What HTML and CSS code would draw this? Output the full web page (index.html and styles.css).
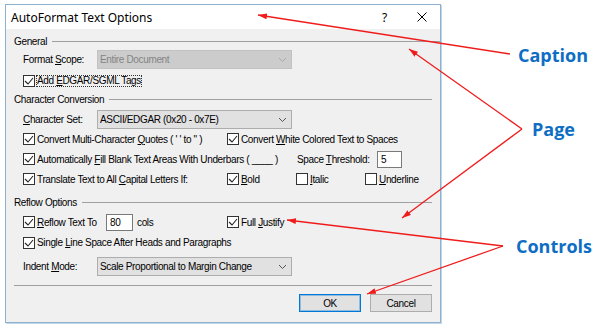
FILE: index.html
```html
<!DOCTYPE html>
<html lang="en">
<head>
  <meta charset="UTF-8">
  <title>AutoFormat Text Options</title>
  <link rel="stylesheet" href="styles.css">
</head>
<body>
  <div class="stage">
    <div class="dialog">
      <div class="titlebar">
        <span class="title">AutoFormat Text Options</span>
        <span class="help">?</span>
        <span class="close">
          <svg width="10" height="10" viewBox="0 0 10 10"><path d="M0.5 0.5 L9.5 9.5 M9.5 0.5 L0.5 9.5" stroke="#000" stroke-width="1" fill="none"/></svg>
        </span>
      </div>

      <div class="page">
        <div class="group-head general"><span>General</span><i class="rule wide"></i></div>
        <div class="row combo-row scope">
          <span class="lbl">Format <u>S</u>cope:</span>
          <div class="combo off"><span>Entire Document</span><svg class="chev" width="7" height="4" viewBox="0 0 7 4"><path d="M0 0 L3.5 3.5 L7 0" stroke="#a9a9a9" fill="none"/></svg></div>
        </div>
        <div class="row edgar">
          <span class="check on"><svg width="10" height="10" viewBox="0 0 10 10"><path d="M1 5 L4 8 L9 2" stroke="#222" stroke-width="1.1" fill="none"/></svg></span>
          <span class="focus">Add <u>E</u>DGAR/SGML Tags</span>
        </div>

        <div class="group-head conversion"><span>Character Conversion</span><i class="rule"></i></div>
        <div class="row combo-row charset">
          <span class="lbl"><u>C</u>haracter Set:</span>
          <div class="combo"><span>ASCII/EDGAR (0x20 - 0x7E)</span><svg class="chev" width="7" height="4" viewBox="0 0 7 4"><path d="M0 0 L3.5 3.5 L7 0" stroke="#555" fill="none"/></svg></div>
        </div>
        <div class="row">
          <span class="cell col-a"><span class="check on"><svg width="10" height="10" viewBox="0 0 10 10"><path d="M1 5 L4 8 L9 2" stroke="#222" stroke-width="1.1" fill="none"/></svg></span><span>Convert Multi-Character <u>Q</u>uotes ( ' ' to " )</span></span>
          <span class="cell"><span class="check on"><svg width="10" height="10" viewBox="0 0 10 10"><path d="M1 5 L4 8 L9 2" stroke="#222" stroke-width="1.1" fill="none"/></svg></span><span>Convert <u>W</u>hite Colored Text to Spaces</span></span>
        </div>
        <div class="row">
          <span class="cell col-fill"><span class="check on"><svg width="10" height="10" viewBox="0 0 10 10"><path d="M1 5 L4 8 L9 2" stroke="#222" stroke-width="1.1" fill="none"/></svg></span><span>Automatically <u>F</u>ill Blank Text Areas With Underbars ( ____ )</span></span>
          <span class="cell col-threshold"><span>Space <u>T</u>hreshold:</span></span>
          <span class="field threshold">5</span>
        </div>
        <div class="row">
          <span class="cell col-a"><span class="check on"><svg width="10" height="10" viewBox="0 0 10 10"><path d="M1 5 L4 8 L9 2" stroke="#222" stroke-width="1.1" fill="none"/></svg></span><span>Translate Text to All <u>C</u>apital Letters If:</span></span>
          <span class="cell col-style"><span class="check on"><svg width="10" height="10" viewBox="0 0 10 10"><path d="M1 5 L4 8 L9 2" stroke="#222" stroke-width="1.1" fill="none"/></svg></span><span><u>B</u>old</span></span>
          <span class="cell col-style"><span class="check"></span><span><u>I</u>talic</span></span>
          <span class="cell"><span class="check"></span><span><u>U</u>nderline</span></span>
        </div>

        <div class="group-head reflow"><span>Reflow Options</span><i class="rule"></i></div>
        <div class="row reflow-row">
          <span class="cell col-reflow"><span class="check on"><svg width="10" height="10" viewBox="0 0 10 10"><path d="M1 5 L4 8 L9 2" stroke="#222" stroke-width="1.1" fill="none"/></svg></span><span><u>R</u>eflow Text To</span></span>
          <span class="field cols">80</span>
          <span class="cell col-unit"><span>cols</span></span>
          <span class="cell"><span class="check on"><svg width="10" height="10" viewBox="0 0 10 10"><path d="M1 5 L4 8 L9 2" stroke="#222" stroke-width="1.1" fill="none"/></svg></span><span>Full <u>J</u>ustify</span></span>
        </div>
        <div class="row single">
          <span class="check on"><svg width="10" height="10" viewBox="0 0 10 10"><path d="M1 5 L4 8 L9 2" stroke="#222" stroke-width="1.1" fill="none"/></svg></span>
          <span>Single <u>L</u>ine Space After Heads and Paragraphs</span>
        </div>
        <div class="row combo-row indent">
          <span class="lbl">Indent <u>M</u>ode:</span>
          <div class="combo"><span>Scale Proportional to Margin Change</span><svg class="chev" width="7" height="4" viewBox="0 0 7 4"><path d="M0 0 L3.5 3.5 L7 0" stroke="#555" fill="none"/></svg></div>
        </div>

        <div class="sep"></div>
        <div class="buttons">
          <span class="btn default">OK</span>
          <span class="btn">Cancel</span>
        </div>
      </div>
    </div>

    <!-- annotation arrows over the screenshot -->
    <svg class="arrows" width="600" height="330" viewBox="0 0 600 330">
      <defs>
        <marker id="head" viewBox="0 0 9 6" refX="9" refY="3" markerWidth="9" markerHeight="6" markerUnits="userSpaceOnUse" orient="auto">
          <path d="M0 0 L9 3 L0 6 z" fill="#f01c1c"/>
        </marker>
      </defs>
      <g stroke="#f01c1c" stroke-width="1.3" fill="none" marker-end="url(#head)">
        <line x1="510" y1="54" x2="258" y2="15"/>
        <line x1="522" y1="129" x2="409" y2="49"/>
        <line x1="522" y1="129" x2="402" y2="218"/>
        <line x1="503" y1="246" x2="287" y2="220"/>
        <line x1="503" y1="246" x2="367" y2="294"/>
      </g>
    </svg>
    <span class="callout caption">Caption</span>
    <span class="callout page-label">Page</span>
    <span class="callout controls">Controls</span>
  </div>
</body>
</html>
```

FILE: styles.css
```css
body {
  margin: 0;
  background-color: white;
  font-family: "Liberation Sans", Arial, sans-serif;
  font-size: 10px;
  letter-spacing: -0.35px;
  color: #000;
}

.stage {
  position: relative;
  width: 600px;
  height: 330px;
  padding: 4px 0 0 5px;
  box-sizing: border-box;
}

.dialog {
  width: 436px;
  height: 319px;
  box-sizing: border-box;
  border: 1px solid #8db1ce;
  box-shadow: 1px 1px 0 #c4d7e6;
  display: flex;
  flex-direction: column;
}

.titlebar {
  height: 24px;
  flex: none;
  background-color: white;
  display: flex;
  align-items: center;
  letter-spacing: 0;
}

.title {
  flex: 1;
  padding-left: 5px;
  font-family: "Noto Sans", "Open Sans", sans-serif;
  font-size: 12px;
}

.help {
  width: 37px;
  text-align: center;
  font-family: "Noto Sans", "Open Sans", sans-serif;
  font-size: 12px;
}

.close {
  width: 37px;
  display: flex;
  justify-content: center;
}

.page {
  flex: 1;
  background-color: #f0f0f0;
  padding: 0 8px;
  display: flex;
  flex-direction: column;
}

.group-head {
  height: 14px;
  display: flex;
  align-items: center;
}

.group-head .rule {
  flex: 1;
  margin: 1px 0 0 5px;
  border-top: 1px solid #a0a0a0;
}

.group-head .rule.wide {
  margin-right: -8px;
}

.general { margin-top: 5px; }
.conversion { margin-top: 1px; }
.reflow { margin-top: 6px; }

.row {
  height: 20px;
  padding-left: 9px;
  display: flex;
  align-items: center;
  white-space: nowrap;
}

.combo-row { height: 19px; }
.scope { margin-top: 2px; }
.edgar { margin-top: 2px; }
.charset { margin-top: 4px; }
.reflow-row { margin-top: 3px; }
.single { height: 21px; }
.indent { margin-top: 4px; }

.lbl {
  width: 74px;
  flex: none;
}

.cell {
  display: flex;
  align-items: center;
  flex: none;
}

.col-a { width: 204px; }
.col-fill { width: 274px; }
.col-threshold { width: 80px; }
.col-style { width: 69px; }
.col-reflow { width: 83px; }
.col-unit { width: 90px; padding-left: 4px; }

.check {
  width: 12px;
  height: 12px;
  box-sizing: border-box;
  border: 1px solid #333;
  background-color: white;
  margin-right: 2px;
  flex: none;
  display: flex;
  align-items: center;
  justify-content: center;
}

.focus {
  border: 1px dotted #333;
  line-height: 10px;
  margin-left: -1px;
}

.combo {
  width: 195px;
  height: 19px;
  box-sizing: border-box;
  border: 1px solid #adadad;
  background-color: #e1e1e1;
  padding: 0 5px 0 2px;
  display: flex;
  align-items: center;
  justify-content: space-between;
}

.combo.off {
  background-color: #cccccc;
  border-color: #c2c2c2;
  color: #848484;
}

.field {
  height: 17px;
  box-sizing: border-box;
  border: 1px solid #7a7a7a;
  background-color: white;
  padding-left: 3px;
  display: flex;
  align-items: center;
  flex: none;
}

.threshold { width: 25px; }
.cols { width: 27px; }

.sep {
  margin-top: 9px;
  border-top: 1px solid #a0a0a0;
}

.buttons {
  margin-top: 8px;
  display: flex;
  justify-content: flex-end;
  gap: 9px;
}

.btn {
  width: 62px;
  height: 18px;
  box-sizing: border-box;
  border: 1px solid #adadad;
  background-color: #e1e1e1;
  display: flex;
  align-items: center;
  justify-content: center;
}

.btn.default {
  border-color: #0078d7;
  box-shadow: inset 0 0 0 1px rgba(0, 120, 215, 0.35);
}

.arrows {
  position: absolute;
  left: 0;
  top: 0;
  pointer-events: none;
}

.callout {
  position: absolute;
  font-family: "Open Sans", sans-serif;
  font-weight: 700;
  font-size: 18px;
  line-height: 18px;
  letter-spacing: 0;
  color: #0e6ec4;
}

.caption { left: 518px; top: 46px; }
.page-label { left: 532px; top: 120px; }
.controls { left: 516px; top: 237px; }
```
